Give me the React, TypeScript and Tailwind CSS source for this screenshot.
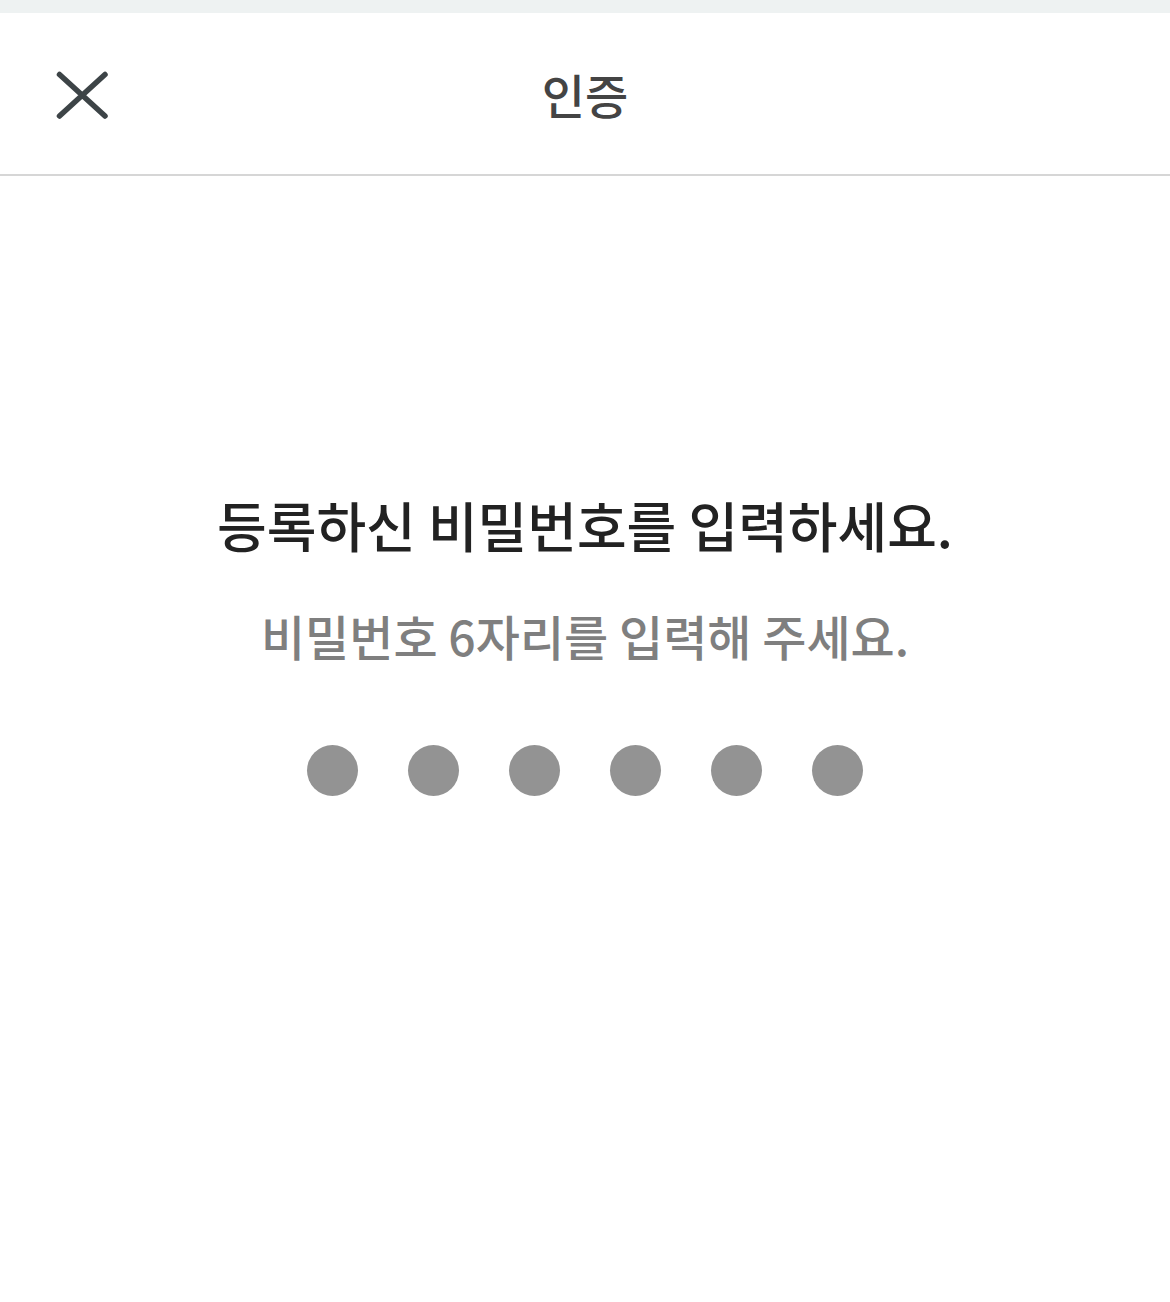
import { useState } from "react";

const PIN_LENGTH = 6;

function CloseIcon() {
  return (
    <svg width="56" height="52" viewBox="0 0 56 52" fill="none">
      <path d="M5.5 5.5L51 47M51 5.5L5.5 47" stroke="#3d4447" strokeWidth="5.5" strokeLinecap="round" />
    </svg>
  );
}

export default function App() {
  const [pin] = useState<string[]>([]);

  return (
    <div
      className="min-h-[1302px] w-[1170px] bg-white"
      style={{ fontFamily: '"Noto Sans CJK KR", "Noto Sans", sans-serif' }}
    >
      <div className="h-[13px] bg-[#eef2f2]" />

      <header className="relative flex h-[163px] items-center justify-center border-b-2 border-[#d6d6d6]">
        <button className="absolute left-[54px] top-[56px]">
          <CloseIcon />
        </button>
        <h1 className="text-[47px] font-medium leading-none text-[#444]">인증</h1>
      </header>

      <main className="flex flex-col items-center pt-[322px]">
        <h2 className="text-[54px] font-medium leading-none text-[#222]">
          등록하신 비밀번호를 입력하세요.
        </h2>
        <p className="mt-[59px] text-[48px] font-medium leading-none text-[#7f7f7f]">
          비밀번호 6자리를 입력해 주세요.
        </p>
        <div className="mt-[86px] flex gap-[50px]">
          {Array.from({ length: PIN_LENGTH }).map((_, i) => (
            <div
              key={i}
              className={`h-[51px] w-[51px] rounded-full ${pin[i] ? "bg-[#333]" : "bg-[#939393]"}`}
            />
          ))}
        </div>
      </main>
    </div>
  );
}
